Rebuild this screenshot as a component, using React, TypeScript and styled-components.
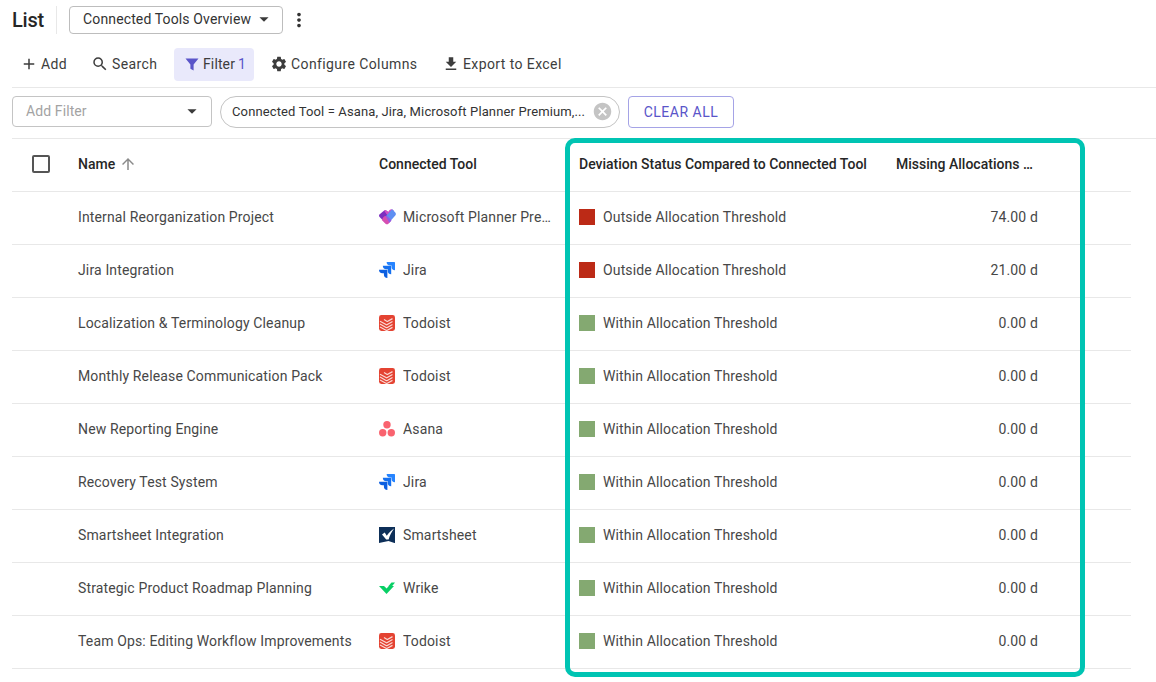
import React from "react";
import styled, { createGlobalStyle } from "styled-components";
import { MdAdd, MdSearch, MdSettings, MdFileDownload, MdMoreVert, MdArrowDropDown, MdCancel, MdArrowUpward } from "react-icons/md";

const Global = createGlobalStyle`
  html, body { margin: 0; padding: 0; background: #fff; overflow: hidden; }
  body { font-family: Roboto, "Liberation Sans", sans-serif; color: #3d3d3d; }
  * { box-sizing: border-box; }
`;

const Page = styled.div`
  position: relative;
  width: 1156px;
  height: 682px;
  padding-left: 12px;
  overflow: hidden;
`;
const TitleRow = styled.div`
  display: flex;
  align-items: center;
  height: 28px;
  margin-top: 6px;
`;
const Title = styled.h1`
  margin: 0;
  font-size: 20px;
  font-weight: 500;
  letter-spacing: -0.2px;
  color: #262626;
  padding: 1px 12px 0 0;
  border-right: 1px solid #e8e8e8;
  line-height: 27px;
`;
const ViewSelect = styled.div`
  display: flex;
  align-items: center;
  justify-content: space-between;
  width: 214px;
  height: 28px;
  margin-left: 12px;
  padding: 0 7px 2px 13px;
  border: 1px solid #bdbdbd;
  border-radius: 4px;
  font-size: 14px;
  letter-spacing: 0.13px;
  color: #333;
  svg { font-size: 22px; color: #3a3a3a; }
`;
const More = styled.div`
  display: flex;
  margin-left: 5px;
  font-size: 22px;
  color: #333;
`;
const Toolbar = styled.div`
  display: flex;
  align-items: center;
  gap: 5px;
  height: 54px;
  padding: 14px 0 6px;
  border-bottom: 1px solid #e8e8e8;
`;
const ToolButton = styled.div<{ $active?: boolean; $w: number; $pad: number }>`
  display: flex;
  align-items: center;
  gap: 3px;
  height: 33px;
  width: ${(p) => p.$w}px;
  padding: 0 0 2px ${(p) => p.$pad}px;
  border-radius: 4px;
  font-size: 14px;
  letter-spacing: ${(p) => (p.$active ? "0.12px" : "0.4px")};
  color: #3d3d3d;
  background: ${(p) => (p.$active ? "#e9e9fb" : "transparent")};
  svg { flex: none; }
`;
const Count = styled.span`
  color: #5a55c9;
`;
const FilterRow = styled.div`
  display: flex;
  align-items: flex-start;
  height: 51px;
  padding-top: 8px;
  border-bottom: 1px solid #e8e8e8;
`;
const AddFilter = styled.div`
  display: flex;
  align-items: center;
  justify-content: space-between;
  width: 200px;
  height: 31px;
  padding: 0 8px 2px 13px;
  border: 1px solid #c4c4c4;
  border-radius: 4px;
  font-size: 14px;
  letter-spacing: 0.1px;
  color: #a3a3a3;
  svg { font-size: 22px; color: #3a3a3a; }
`;
const Chip = styled.div`
  display: flex;
  align-items: center;
  justify-content: space-between;
  width: 400px;
  height: 32px;
  margin-left: 8px;
  padding: 0 6px 1px 11px;
  border: 1px solid #c4c4c4;
  border-radius: 16px;
  font-size: 13px;
  letter-spacing: 0.13px;
  color: #333;
  white-space: nowrap;
  svg { font-size: 21px; color: #c4c4c4; flex: none; }
`;
const ClearAll = styled.div`
  display: flex;
  align-items: center;
  justify-content: center;
  width: 106px;
  height: 32px;
  margin-left: 8px;
  border: 1px solid #a5a3e6;
  border-radius: 4px;
  font-size: 14px;
  letter-spacing: 0.5px;
  color: #5a55c9;
`;
const Table = styled.div`
  width: 1119px;
`;
const Row = styled.div`
  display: grid;
  grid-template-columns: 54px 301px 200px 317px 166px 81px;
  align-items: center;
  height: 53px;
  padding-bottom: 2px;
  border-bottom: 1px solid #e8e8e8;
`;
const Cell = styled.div<{ $right?: boolean }>`
  display: flex;
  align-items: center;
  min-width: 0;
  padding: 0 12px;
  font-size: 14px;
  letter-spacing: 0.14px;
  color: #474747;
  white-space: nowrap;
  justify-content: ${(p) => (p.$right ? "flex-end" : "flex-start")};
`;
const HeadCell = styled(Cell)`
  font-weight: 500;
  letter-spacing: 0;
  color: #262626;
  svg { font-size: 18px; color: #8a8a8a; margin-left: 4px; }
`;
const Clip = styled.span`
  overflow: hidden;
  text-overflow: ellipsis;
`;
const Check = styled.div`
  width: 18px;
  height: 18px;
  margin-left: 8px;
  border: 2px solid #555;
  border-radius: 2px;
`;
const LogoBox = styled.span`
  display: inline-flex;
  flex: none;
  width: 16px;
  height: 16px;
  margin-right: 8px;
  svg { flex: none; }
`;
const Swatch = styled.span<{ $c: string }>`
  flex: none;
  width: 16px;
  height: 16px;
  margin-right: 8px;
  background: ${(p) => p.$c};
`;
const Highlight = styled.div`
  position: absolute;
  left: 565px;
  top: 138px;
  width: 520px;
  height: 539px;
  border: 5px solid #00c4b3;
  border-radius: 10px;
  pointer-events: none;
`;

const Funnel = () => (
  <svg width="16" height="16" viewBox="0 0 16 16"><path d="M1.5 2.5h13L9.6 8.6V14.5L6.4 12.8V8.6z" fill="#5a55c9" /></svg>
);

const Planner = () => (
  <svg width="17" height="16" viewBox="0 0 17 16">
    <path d="M.4 5.5 4.600 1.900C5.700 1 7 1 8 2l1.500 1.500L7.800 14.600 6.600 14.200.4 7.800C-.1 7.100-.1 6.200.4 5.500z" fill="#7d2fc0" />
    <path d="M5 1.600C6 .9 7.100 1 8 2l1 1 1.600-1.900C11.600-.1 13.100-.1 14 1l1 1-5 6.500z" fill="#d24fc6" />
    <path d="M13 .3c.4.100.7.400 1 .7l2.300 2.600c.8.900.8 2 0 2.900l-6.700 7.400-3-6.400z" fill="#5f8ff2" />
    <path d="M4.300 8.200c1.500-1.500 3.400-1.500 4.900 0l3.200 3.300-3 3.200c-.8.800-2 .8-2.800 0L2.800 11z" fill="#d64fb2" />
    <path d="M6.600 7.100c.9-.2 1.900.1 2.600 1.100l3.200 3.300-2 2.200z" fill="#8b5fe8" />
  </svg>
);
const Jira = () => (
  <svg width="16" height="16" viewBox="0 0 24 24">
    <path d="M11.571 11.513H0a5.218 5.218 0 0 0 5.232 5.215h2.13v2.057A5.215 5.215 0 0 0 12.575 24V12.518a1.005 1.005 0 0 0-1.005-1.005z" fill="#0c5fe0" />
    <path d="M17.294 5.757H5.736a5.215 5.215 0 0 0 5.215 5.214h2.129v2.058a5.218 5.218 0 0 0 5.215 5.214V6.758a1.001 1.001 0 0 0-1.001-1.001z" fill="#1570ef" />
    <path d="M23.013 0H11.455a5.215 5.215 0 0 0 5.215 5.215h2.129v2.057A5.215 5.215 0 0 0 24 12.483V1.005A1.001 1.001 0 0 0 23.013 0z" fill="#2684ff" />
  </svg>
);
const Todoist = () => (
  <svg width="16" height="16" viewBox="0 0 16 16">
    <rect width="16" height="16" rx="2.400" fill="#e44332" />
    <path d="M1 6.200 7 9.600c.5.300.8.300 1.300 0L13.500 6.600M1 9.100 7 12.500c.5.300.8.300 1.300 0L13.500 9.500M1 12l6 3.200c.5.300.8.300 1.300 0L13.500 12.400M5 4.500 7.800 6.200c.4.200.7.200 1 0L13.500 3.600" fill="none" stroke="#fbd9d4" strokeWidth="1.200" />
  </svg>
);
const Asana = () => (
  <svg width="16" height="16" viewBox="0 0 16 16">
    <circle cx="8" cy="3.800" r="3.700" fill="#f9636f" />
    <circle cx="3.700" cy="11.800" r="3.700" fill="#f9636f" />
    <circle cx="12.300" cy="11.800" r="3.700" fill="#f9636f" />
  </svg>
);
const Smartsheet = () => (
  <svg width="16" height="16" viewBox="0 0 16 16">
    <path d="M0 0h16v16.200L9.500 14 0 16z" fill="#0d2f58" />
    <path d="M3 7.400 5.700 5.600 7.800 8.800C9.600 6 11.800 3.600 15 1.500 12.600 5 10.800 8.500 9.600 12.500H7.200z" fill="#fff" />
  </svg>
);
const Wrike = () => (
  <svg width="16" height="16" viewBox="0 0 16 16">
    <path d="M0 6h5l2.600 2.400 2.200-2.400H15L7.500 14z" fill="#08cf65" />
    <path d="M9.500 6 12.500 2.500h3.500l-2.800 3.500z" fill="#08cf65" />
  </svg>
);

type Logo = React.FC;
const rows: [string, Logo, string, boolean, string][] = [
  ["Internal Reorganization Project", Planner, "Microsoft Planner Premium", true, "74.00 d"],
  ["Jira Integration", Jira, "Jira", true, "21.00 d"],
  ["Localization & Terminology Cleanup", Todoist, "Todoist", false, "0.00 d"],
  ["Monthly Release Communication Pack", Todoist, "Todoist", false, "0.00 d"],
  ["New Reporting Engine", Asana, "Asana", false, "0.00 d"],
  ["Recovery Test System", Jira, "Jira", false, "0.00 d"],
  ["Smartsheet Integration", Smartsheet, "Smartsheet", false, "0.00 d"],
  ["Strategic Product Roadmap Planning", Wrike, "Wrike", false, "0.00 d"],
  ["Team Ops: Editing Workflow Improvements", Todoist, "Todoist", false, "0.00 d"],
];

export default function App() {
  return (
    <Page>
      <Global />
      <TitleRow>
        <Title>List</Title>
        <ViewSelect>Connected Tools Overview<MdArrowDropDown /></ViewSelect>
        <More><MdMoreVert /></More>
      </TitleRow>
      <Toolbar>
        <ToolButton $w={66} $pad={8}><MdAdd size={18} />Add</ToolButton>
        <ToolButton $w={86} $pad={8}><MdSearch size={18} />Search</ToolButton>
        <ToolButton $w={80} $pad={10} $active><Funnel />Filter <Count>1</Count></ToolButton>
        <ToolButton $w={171} $pad={11}><MdSettings size={18} />Configure Columns</ToolButton>
        <ToolButton $w={135} $pad={7}><MdFileDownload size={18} />Export to Excel</ToolButton>
      </Toolbar>
      <FilterRow>
        <AddFilter>Add Filter<MdArrowDropDown /></AddFilter>
        <Chip>Connected Tool = Asana, Jira, Microsoft Planner Premium,...<MdCancel /></Chip>
        <ClearAll>CLEAR ALL</ClearAll>
      </FilterRow>
      <Table>
        <Row>
          <Cell><Check /></Cell>
          <HeadCell>Name<MdArrowUpward /></HeadCell>
          <HeadCell>Connected Tool</HeadCell>
          <HeadCell>Deviation Status Compared to Connected Tool</HeadCell>
          <HeadCell><Clip>Missing Allocations Compared</Clip></HeadCell>
          <span />
        </Row>
        {rows.map(([name, Icon, tool, out, val]) => (
          <Row key={name}>
            <span />
            <Cell>{name}</Cell>
            <Cell><LogoBox><Icon /></LogoBox><Clip>{tool}</Clip></Cell>
            <Cell><Swatch $c={out ? "#bc2a16" : "#84a971"} />{out ? "Outside Allocation Threshold" : "Within Allocation Threshold"}</Cell>
            <Cell $right>{val}</Cell>
            <span />
          </Row>
        ))}
      </Table>
      <Highlight />
    </Page>
  );
}
